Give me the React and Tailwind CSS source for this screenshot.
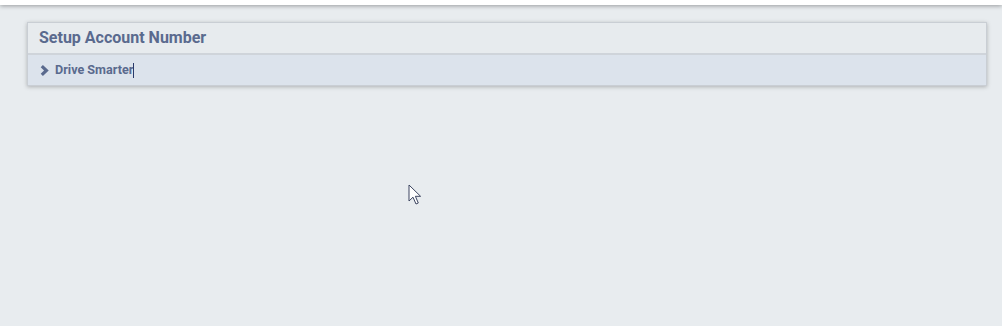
import React from "react";

export default function App() {
  return (
    <div className="relative w-[1002px] h-[326px] overflow-hidden bg-[#e8ecef]" style={{ fontFamily: "Roboto, 'Liberation Sans', sans-serif" }}>
      <div className="h-[5px] bg-white shadow-[0_1px_4px_rgba(0,0,0,0.35)]" />
      <div className="pt-[17px] pl-[27px] pr-[15px]">
        <div className="w-[960px] border border-[#c9ced4] shadow-[0_1px_4px_rgba(0,0,0,0.25)]">
          <div className="h-[32px] bg-[#e7ebee] border-b-2 border-[#cfd4da] flex items-center pl-[11px]">
            <span className="text-[16px] font-bold text-[#5a6a8e]">Setup Account Number</span>
          </div>
          <div className="h-[30px] bg-[#dce3ec] flex items-center pl-[12px]">
            <svg width="9" height="11" viewBox="0 0 9 11" className="mr-[6px]">
              <path d="M1.8 1.2 L6.4 5.5 L1.8 9.8" fill="none" stroke="#5a6a8e" strokeWidth="3.2" strokeLinejoin="miter" />
            </svg>
            <span className="text-[12.6px] font-bold text-[#5a6a8e]">Drive Smarter</span>
            <span className="inline-block w-[1px] h-[15px] bg-[#2a3a6a]" />
          </div>
        </div>
      </div>
      <svg className="absolute left-[408px] top-[184px]" width="14" height="22" viewBox="0 0 14 22">
        <path d="M1 1 L1 17 L5 13.2 L8 20 L10.3 19 L7.4 12.3 L12.6 12.3 Z" fill="#ffffff" stroke="#3c4560" strokeWidth="1" strokeLinejoin="miter" />
      </svg>
    </div>
  );
}
